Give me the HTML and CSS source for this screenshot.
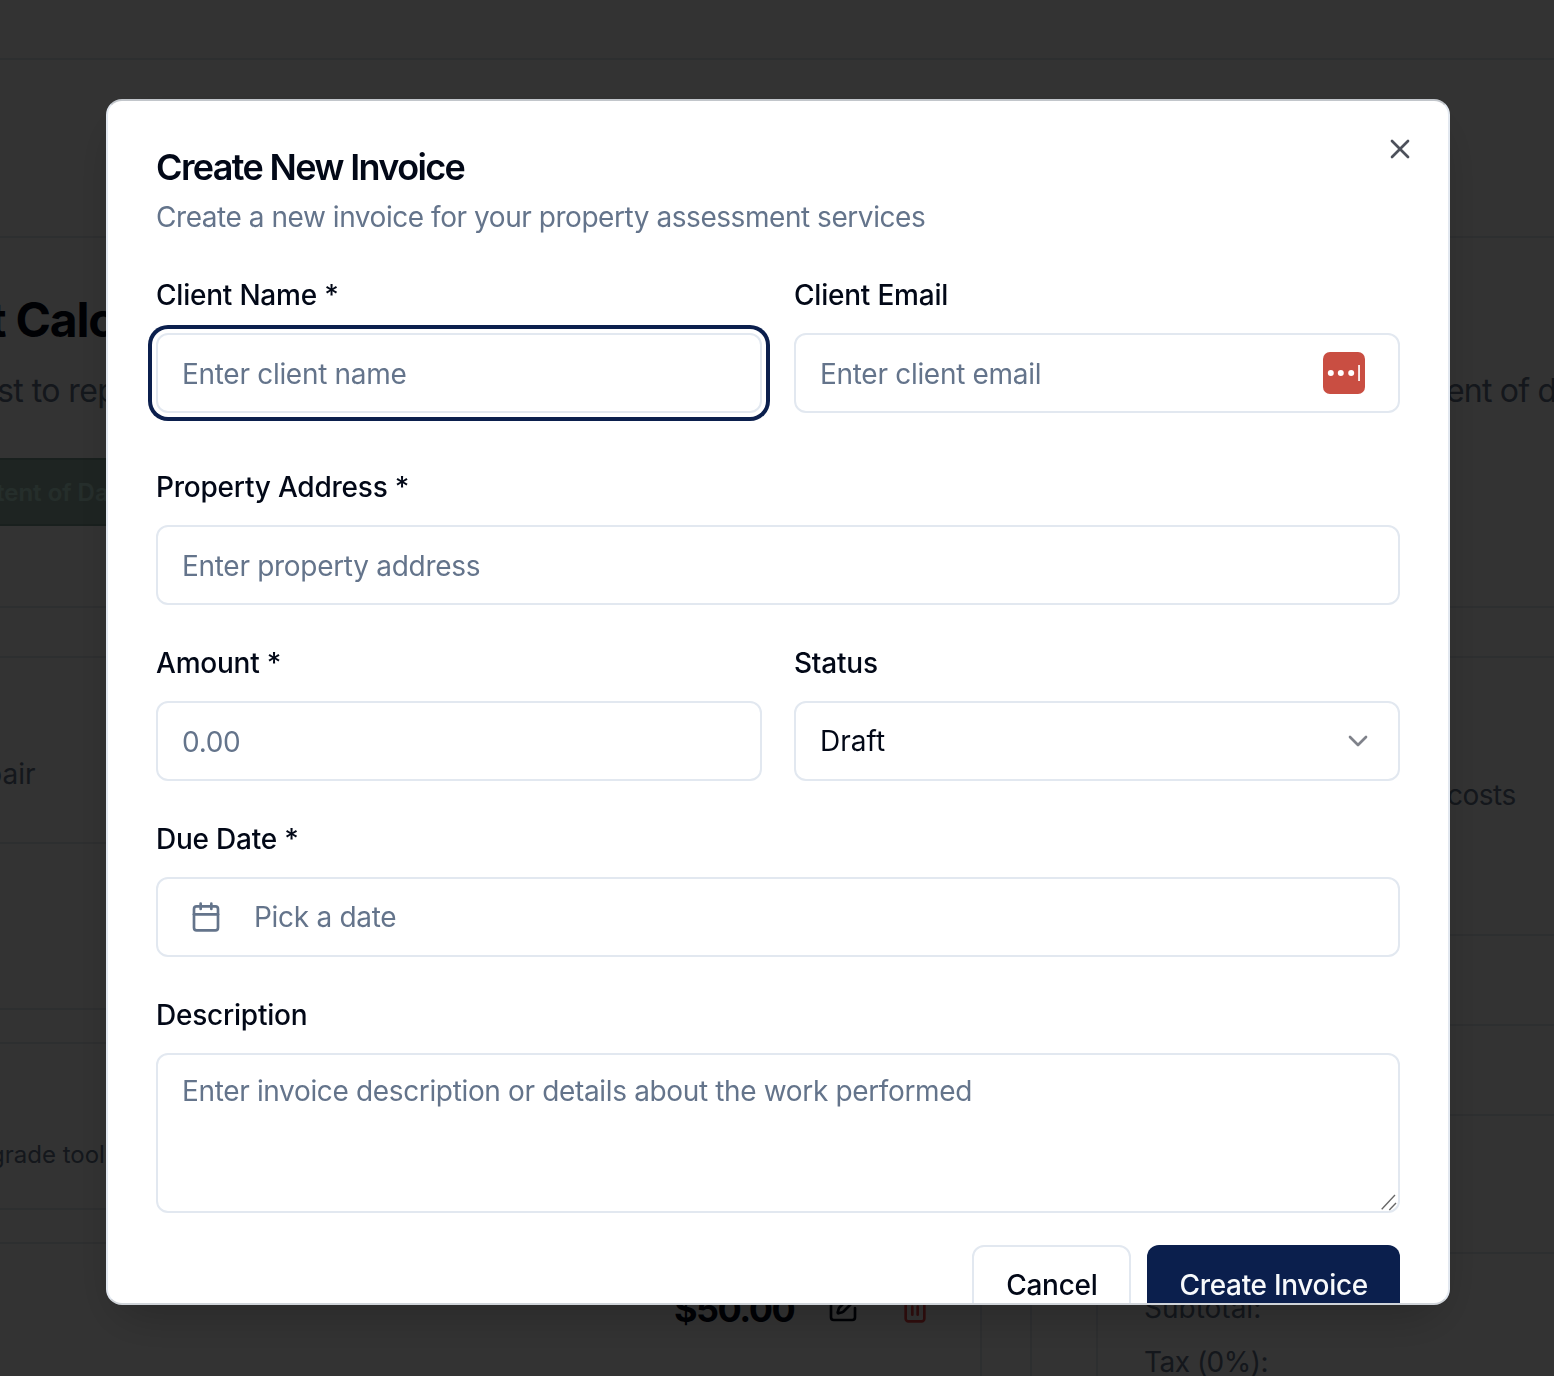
FILE: index.html
```html
<!DOCTYPE html>
<html lang="en">
<head>
<meta charset="utf-8">
<title>Create New Invoice</title>
<link rel="stylesheet" href="styles.css">
</head>
<body>
<div class="page">
  <div class="band band-top"></div>
  <div class="band band-hero"></div>
  <div class="columns">
    <div class="col-main">
      <div class="row row-intro">
        <h1 class="page-title">t Calculator</h1>
        <p class="page-sub">st to repair</p>
      </div>
      <div class="row-banner"><span class="banner-text">tent of Damage</span></div>
      <div class="row row-a"></div>
      <div class="row row-b"></div>
      <div class="row row-c"><span class="cell-text cell-pair">pair</span></div>
      <div class="row row-d"></div>
      <div class="row row-e"></div>
      <div class="row row-d"><span class="cell-text cell-tool">grade tool</span></div>
      <div class="row row-e"></div>
      <div class="row-total">
        <div class="total-cell">
          <span class="total-amount">$50.00</span>
          <svg class="bg-icon icon-edit" viewBox="0 0 24 24"><path d="M12 3H5a2 2 0 0 0-2 2v14a2 2 0 0 0 2 2h14a2 2 0 0 0 2-2v-7"/><path d="M18.375 2.625a1 1 0 0 1 3 3l-9.013 9.014a2 2 0 0 1-.853.505l-2.873.84a.5.5 0 0 1-.62-.62l.84-2.873a2 2 0 0 1 .506-.852z"/></svg>
          <svg class="bg-icon icon-trash" viewBox="0 0 24 24"><path d="M3 6h18"/><path d="M19 6v14c0 1-1 2-2 2H7c-1 0-2-1-2-2V6"/><path d="M8 6V4c0-1 1-2 2-2h4c1 0 2 1 2 2v2"/><path d="M10 11v6"/><path d="M14 11v6"/></svg>
        </div>
        <div class="total-gap"></div>
      </div>
    </div>
    <div class="col-side">
      <div class="row side-a"><span class="side-lead">ent of damage</span></div>
      <div class="row row-b"></div>
      <div class="row side-c"><span class="side-text">costs</span></div>
      <div class="row side-d"></div>
      <div class="row side-d"></div>
      <div class="row side-e"></div>
      <div class="summary">
        <div class="summary-line">Subtotal:</div>
        <div class="summary-line summary-tax">Tax (0%):</div>
      </div>
    </div>
  </div>
</div>

<div class="overlay"></div>

<div class="modal" role="dialog" aria-labelledby="dlg-title">
  <button class="close" type="button" aria-label="Close">
    <svg class="icon" viewBox="0 0 24 24"><path d="M18 6 6 18"/><path d="m6 6 12 12"/></svg>
  </button>
  <h2 class="title" id="dlg-title">Create New Invoice</h2>
  <p class="desc">Create a new invoice for your property assessment services</p>
  <form class="form">
    <div class="pair pair-first">
      <div class="field">
        <label class="label">Client Name *</label>
        <input class="control control-input control-focus" type="text" placeholder="Enter client name">
      </div>
      <div class="field">
        <label class="label">Client Email</label>
        <div class="control-wrap">
          <input class="control control-input" type="email" placeholder="Enter client email">
          <svg class="pw-badge" viewBox="0 0 42 42" aria-hidden="true">
            <rect width="42" height="42" rx="7" fill="#c94e42"/>
            <circle cx="7.8" cy="21" r="3" fill="#fff"/>
            <circle cx="17.8" cy="21" r="3" fill="#fff"/>
            <circle cx="28.2" cy="21" r="3" fill="#fff"/>
            <rect x="35.2" y="13" width="1.7" height="16" fill="#fff"/>
          </svg>
        </div>
      </div>
    </div>
    <div class="field">
      <label class="label">Property Address *</label>
      <input class="control control-input" type="text" placeholder="Enter property address">
    </div>
    <div class="pair">
      <div class="field">
        <label class="label">Amount *</label>
        <input class="control control-input" type="text" placeholder="0.00">
      </div>
      <div class="field">
        <label class="label">Status</label>
        <button class="control select" type="button">
          <span>Draft</span>
          <svg class="icon chevron" viewBox="0 0 24 24"><path d="m6 9 6 6 6-6"/></svg>
        </button>
      </div>
    </div>
    <div class="field">
      <label class="label">Due Date *</label>
      <button class="control date" type="button">
        <svg class="icon" viewBox="0 0 24 24"><path d="M8 2v4"/><path d="M16 2v4"/><rect x="3" y="4" width="18" height="18" rx="2"/><path d="M3 10h18"/></svg>
        <span class="date-text">Pick a date</span>
      </button>
    </div>
    <div class="field">
      <label class="label">Description</label>
      <div class="control-wrap">
        <textarea class="control control-input area" placeholder="Enter invoice description or details about the work performed"></textarea>
        <svg class="grip" viewBox="0 0 20 20" aria-hidden="true"><path d="M1.7 16.3 15 2"/><path d="M9.3 17 16 10"/></svg>
      </div>
    </div>
    <div class="actions">
      <button class="btn btn-outline" type="button">Cancel</button>
      <button class="btn btn-primary" type="button">Create Invoice</button>
    </div>
  </form>
</div>
</body>
</html>
```

FILE: styles.css
```css
* { box-sizing: border-box; }
html, body { margin: 0; height: 100%; }
body {
  height: 1376px;
  overflow: hidden;
  background: #fff;
  color: #020817;
  font-family: Inter, "Liberation Sans", sans-serif;
}

/* Page behind the dialog */
.page { display: flex; flex-direction: column; height: 1376px; overflow: hidden; }
.band { border-bottom: 2px solid #e2e8f0; flex: none; }
.band-top { height: 60px; }
.band-hero { height: 178px; }
.columns { display: grid; grid-template-columns: 1096px 458px; flex: 1; min-height: 0; }
.col-main, .col-side { display: flex; flex-direction: column; min-width: 0; }
.row { border-bottom: 2px solid #e2e8f0; flex: none; white-space: nowrap; }
.row-intro { height: 220px; padding-top: 52px; border-bottom: 0; }
.page-title { margin: 0 0 0 -11px; font-size: 48px; line-height: 60px; font-weight: 700; letter-spacing: -1.2px; }
.page-sub { margin: 19px 0 0 -3px; font-size: 32px; line-height: 44px; letter-spacing: -.57px; color: #64748b; }
.row-banner {
  flex: none; height: 68px; display: flex; align-items: center;
  background: #96b4aa; border: solid #7f9f95; border-width: 2px 0; white-space: nowrap;
}
.banner-text { margin-left: -4px; font-size: 24px; font-weight: 600; color: #bbe6d8; }
.row-a { height: 82px; }
.row-b { height: 50px; }
.row-c { height: 186px; display: flex; align-items: center; padding-top: 47px; }
.row-d { height: 166px; display: flex; align-items: center; padding-top: 56px; }
.row-e { height: 34px; }
.cell-text { font-size: 28px; color: #64748b; }
.cell-pair { margin-left: -15px; }
.cell-tool { margin-left: -10px; font-size: 24px; }
.row-total { flex: 1; display: flex; }
.total-cell { width: 980px; display: flex; align-items: flex-start; padding: 45px 0 0 674px; }
.total-amount { font-size: 36px; line-height: 40px; font-weight: 700; letter-spacing: -1.5px; width: 153px; }
.bg-icon { width: 32px; height: 32px; fill: none; stroke: currentColor; stroke-width: 2; stroke-linecap: round; stroke-linejoin: round; margin-top: 3px; flex: none; }
.icon-trash { color: #ef4444; margin-left: 40px; }
.total-gap { width: 52px; border: solid #e2e8f0; border-width: 0 2px; }
.side-a { height: 370px; padding: 131px 0 0 350px; }
.side-c { height: 278px; padding: 117px 0 0 351px; }
.side-d { height: 90px; }
.side-e { height: 138px; }
.side-lead { font-size: 32px; line-height: 44px; letter-spacing: -.8px; color: #64748b; }
.side-text { font-size: 28px; line-height: 40px; letter-spacing: -.5px; color: #64748b; }
.summary { flex: 1; border-left: 2px solid #e2e8f0; padding: 34px 0 0 46px; display: flex; flex-direction: column; gap: 14px; }
.summary-line { font-size: 28px; line-height: 40px; color: #64748b; }
.summary-tax { letter-spacing: -.5px; }

/* Overlay + dialog */
.overlay { position: fixed; inset: 0; background: rgba(0, 0, 0, .8); }
.modal {
  position: fixed; left: 106px; top: 99px; width: 1344px; height: 1206px;
  padding: 48px; background: #fff; border: 2px solid #e2e8f0;
  border-top-color: #c2c6cb; border-bottom-color: #d0d4d9; border-radius: 16px;
  overflow: hidden; box-shadow: 0 20px 50px -12px rgba(0, 0, 0, .25);
}
.close {
  position: absolute; right: 32px; top: 32px; width: 32px; height: 32px; padding: 0;
  border: 0; background: none; color: #020817; opacity: .7;
}
.icon { display: block; width: 32px; height: 32px; flex: none; fill: none; stroke: currentColor; stroke-width: 2; stroke-linecap: round; stroke-linejoin: round; }
.title { margin: 0; font-size: 36px; line-height: 36px; font-weight: 600; letter-spacing: -1.65px; }
.desc { margin: 12px 0 38px; font-size: 28px; line-height: 40px; letter-spacing: -.45px; color: #64748b; }
.form { display: flex; flex-direction: column; gap: 38px; }
.pair { display: grid; grid-template-columns: 1fr 1fr; gap: 32px; }
.pair-first { margin-bottom: 16px; }
.field { display: flex; flex-direction: column; gap: 18px; }
.label { font-size: 28px; line-height: 40px; font-weight: 500; letter-spacing: -.22px; }
.control-wrap { position: relative; }
.control {
  display: flex; align-items: center; width: 100%; height: 80px; padding: 0 24px; margin: 0;
  border: 2px solid #e2e8f0; border-radius: 12px; background: #fff; outline: 0;
  color: #020817; font-family: inherit; font-size: 28px; text-align: left;
}
.control-input { padding-top: 2px; letter-spacing: -.3px; }
.control::placeholder { color: #64748b; opacity: 1; }
.control-focus { box-shadow: 0 0 0 4px #fff, 0 0 0 8px #0b1f4d; }
.pw-badge { position: absolute; right: 35px; top: 19px; width: 42px; height: 42px; }
.select { justify-content: space-between; }
.chevron { opacity: .5; }
.date { gap: 32px; padding-left: 32px; color: #64748b; }
.date-text { letter-spacing: -.3px; }
.area { display: block; height: 160px; padding: 16px 24px; line-height: 40px; letter-spacing: -.35px; resize: none; }
.grip { position: absolute; right: 0; bottom: 0; width: 20px; height: 20px; fill: none; stroke: #666; stroke-width: 1.3; }
.actions { display: flex; justify-content: flex-end; gap: 16px; margin-top: -6px; }
.btn {
  height: 80px; padding: 0 32px; border-radius: 12px; font-family: inherit;
  font-size: 28px; font-weight: 500; letter-spacing: -.3px; flex: none;
}
.btn-outline { background: #fff; border: 2px solid #e2e8f0; color: #020817; }
.btn-primary { background: #0b1f4d; border: 0; color: #f8fafc; }
```
